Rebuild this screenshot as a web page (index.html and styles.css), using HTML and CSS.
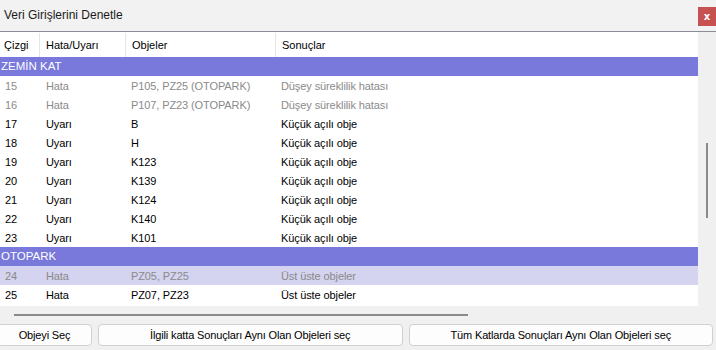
FILE: index.html
```html
<!DOCTYPE html>
<html lang="tr">
<head>
    <meta charset="UTF-8">
    <meta name="viewport" content="width=device-width, initial-scale=1.0">
    <title>Veri Girişlerini Denetle</title>
    <link rel="stylesheet" href="styles.css">
</head>
<body>
    <div class="title-bar">
        <span class="title">Veri Girişlerini Denetle</span>
        <button class="close-btn" type="button">x</button>
    </div>

    <div class="list-area">
        <div class="list">
            <div class="row head">
                <div class="cell">Çizgi</div>
                <div class="cell">Hata/Uyarı</div>
                <div class="cell">Objeler</div>
                <div class="cell">Sonuçlar</div>
            </div>

            <div class="group">ZEMİN KAT</div>
            <div class="row muted">
                <div class="cell">15</div><div class="cell">Hata</div>
                <div class="cell">P105, PZ25 (OTOPARK)</div><div class="cell">Düşey süreklilik hatası</div>
            </div>
            <div class="row muted">
                <div class="cell">16</div><div class="cell">Hata</div>
                <div class="cell">P107, PZ23 (OTOPARK)</div><div class="cell">Düşey süreklilik hatası</div>
            </div>
            <div class="row">
                <div class="cell">17</div><div class="cell">Uyarı</div>
                <div class="cell">B</div><div class="cell">Küçük açılı obje</div>
            </div>
            <div class="row">
                <div class="cell">18</div><div class="cell">Uyarı</div>
                <div class="cell">H</div><div class="cell">Küçük açılı obje</div>
            </div>
            <div class="row">
                <div class="cell">19</div><div class="cell">Uyarı</div>
                <div class="cell">K123</div><div class="cell">Küçük açılı obje</div>
            </div>
            <div class="row">
                <div class="cell">20</div><div class="cell">Uyarı</div>
                <div class="cell">K139</div><div class="cell">Küçük açılı obje</div>
            </div>
            <div class="row">
                <div class="cell">21</div><div class="cell">Uyarı</div>
                <div class="cell">K124</div><div class="cell">Küçük açılı obje</div>
            </div>
            <div class="row">
                <div class="cell">22</div><div class="cell">Uyarı</div>
                <div class="cell">K140</div><div class="cell">Küçük açılı obje</div>
            </div>
            <div class="row">
                <div class="cell">23</div><div class="cell">Uyarı</div>
                <div class="cell">K101</div><div class="cell">Küçük açılı obje</div>
            </div>

            <div class="group">OTOPARK</div>
            <div class="row muted selected">
                <div class="cell">24</div><div class="cell">Hata</div>
                <div class="cell">PZ05, PZ25</div><div class="cell">Üst üste objeler</div>
            </div>
            <div class="row">
                <div class="cell">25</div><div class="cell">Hata</div>
                <div class="cell">PZ07, PZ23</div><div class="cell">Üst üste objeler</div>
            </div>
        </div>
        <div class="vscroll">
            <div class="vthumb"></div>
        </div>
    </div>

    <div class="hscroll">
        <div class="hthumb"></div>
    </div>

    <div class="actions">
        <button class="btn btn-small" type="button">Objeyi Seç</button>
        <button class="btn" type="button">İlgili katta Sonuçları Aynı Olan Objeleri seç</button>
        <button class="btn" type="button">Tüm Katlarda Sonuçları Aynı Olan Objeleri seç</button>
    </div>
</body>
</html>
```

FILE: styles.css
```css
body {
    margin: 0;
    background-color: #f0f0f0;
    font-family: 'Liberation Sans', Arial, sans-serif;
    font-size: 11px;
    color: #000;
    width: 716px;
    height: 350px;
    overflow: hidden;
}

.title-bar {
    height: 31px;
    background-color: #f2f2f2;
    border-bottom: 1px solid #8c8c96;
    display: flex;
    align-items: center;
    justify-content: space-between;
}

.title {
    padding-left: 4px;
    font-size: 12px;
    color: #1a1a1a;
    margin-top: -2px;
}

.close-btn {
    width: 18px;
    height: 19px;
    margin-top: 2px;
    padding: 0;
    border: none;
    background-color: #c75050;
    color: #fff;
    font-family: 'DejaVu Sans', sans-serif;
    font-size: 10px;
    font-weight: bold;
    line-height: 17px;
}

.list-area {
    display: flex;
    height: 274px;
}

.list {
    width: 698px;
    background-color: #fff;
}

.row {
    display: grid;
    grid-template-columns: 40px 86px 150px 1fr;
    height: 19px;
    align-items: center;
    letter-spacing: -0.1px;
}

.row .cell {
    padding-left: 5px;
    white-space: nowrap;
}

.row .cell:nth-child(2) {
    padding-left: 6px;
}

.head {
    height: 25px;
    align-items: stretch;
    letter-spacing: 0;
}

.head .cell {
    display: flex;
    align-items: center;
    padding-left: 4px;
    border-right: 1px solid #e5e5e5;
    margin-top: 1px;
}

.head .cell:nth-child(2),
.head .cell:nth-child(3),
.head .cell:nth-child(4) {
    padding-left: 6px;
}

.head .cell:last-child {
    border-right: none;
}

.group {
    height: 19px;
    line-height: 19px;
    background-color: #7879db;
    color: #fff;
    padding-left: 1px;
    font-size: 11.5px;
}

.muted {
    color: #8a8a8a;
}

.selected {
    background-color: #d4d3f0;
}

.vscroll {
    flex: 1;
    background-color: #f0f0f0;
    position: relative;
}

.vthumb {
    position: absolute;
    left: 8px;
    top: 111px;
    width: 2px;
    height: 75px;
    background-color: #8a8a8a;
}

.hscroll {
    height: 16px;
    display: flex;
    align-items: center;
    padding-left: 14px;
}

.hthumb {
    width: 454px;
    height: 2px;
    margin-top: 1px;
    background-color: #8a8a8a;
}

.actions {
    display: flex;
    gap: 6px;
    margin-top: 2px;
    padding-right: 3px;
}

.btn {
    height: 22px;
    flex: 1;
    padding: 0;
    border: 1px solid #d0d0d0;
    border-radius: 4px;
    background-color: #fdfdfd;
    font-family: 'Liberation Sans', Arial, sans-serif;
    font-size: 11px;
    letter-spacing: -0.15px;
    color: #000;
}

.btn-small {
    flex: 0 0 95px;
    margin-left: -3px;
}
```
